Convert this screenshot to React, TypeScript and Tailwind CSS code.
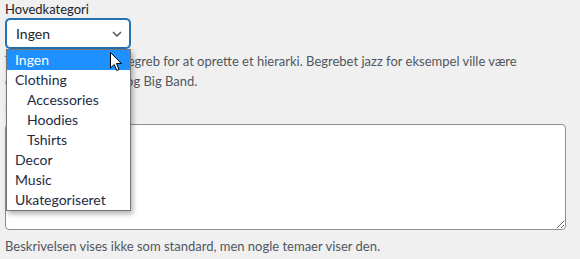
import { useState } from "react";

const options = [
  { label: "Ingen", depth: 0 },
  { label: "Clothing", depth: 0 },
  { label: "Accessories", depth: 1 },
  { label: "Hoodies", depth: 1 },
  { label: "Tshirts", depth: 1 },
  { label: "Decor", depth: 0 },
  { label: "Music", depth: 0 },
  { label: "Ukategoriseret", depth: 0 },
];

export default function App() {
  const [selected] = useState(0);

  return (
    <div className="min-h-screen bg-[#f0f0f1] px-[5px] font-['Lato',sans-serif] text-[13px] text-[#1d2327]">
      <label className="block leading-[18px]">Hovedkategori</label>

      <div className="relative ml-[1px] mt-[1px] w-[124px]">
        <div className="flex h-[29px] items-center justify-between rounded-[4px] border border-[#2271b1] bg-white pl-[9px] pr-[6px] text-[14px] shadow-[0_0_0_1px_#2271b1]">
          <span>{options[selected].label}</span>
          <svg width="10" height="6" viewBox="0 0 10 6" className="mr-[1px]">
            <path d="M1 1 L5 5 L9 1" fill="none" stroke="#50575e" strokeWidth="1.5" />
          </svg>
        </div>

        <ul className="absolute left-0 top-[30px] z-10 w-[125px] border border-[#767676] bg-white shadow-[2px_3px_5px_rgba(0,0,0,0.3)]">
          {options.map((o, i) => (
            <li
              key={o.label}
              className={`h-[20px] pr-2 text-[14px] leading-[20px] ${
                i === selected ? "bg-[#1e90ff] text-white" : "text-[#1e2a44]"
              } ${o.depth ? "pl-[20px]" : "pl-[8px]"}`}
            >
              {o.label}
            </li>
          ))}
        </ul>

        {/* mouse pointer */}
        <svg
          width="13"
          height="20"
          viewBox="0 0 13 20"
          className="absolute left-[104px] top-[33px] z-20"
        >
          <path
            d="M0.5 0.5 L0.5 16 L4.2 12.5 L6.8 18.5 L9 17.5 L6.5 11.6 L11.5 11.6 Z"
            fill="white"
            stroke="black"
            strokeWidth="1"
            strokeLinejoin="miter"
          />
        </svg>
      </div>

      <p className="mt-[4px] whitespace-nowrap leading-[19.5px] text-[#50575e]">
        Tildel et overordnet begreb for at oprette et hierarki. Begrebet jazz for eksempel ville være
        <br />
        overordnet til Bebop og Big Band.
      </p>

      <label className="mt-[10px] block leading-[19px]">Beskrivelse</label>
      <textarea
        className="mt-[4px] block h-[106px] w-[561px] rounded-[4px] border border-[#8c8f94] bg-white"
        defaultValue=""
      />

      <p className="mt-[7px] whitespace-nowrap leading-[19.5px] text-[#50575e]">
        Beskrivelsen vises ikke som standard, men nogle temaer viser den.
      </p>
    </div>
  );
}
